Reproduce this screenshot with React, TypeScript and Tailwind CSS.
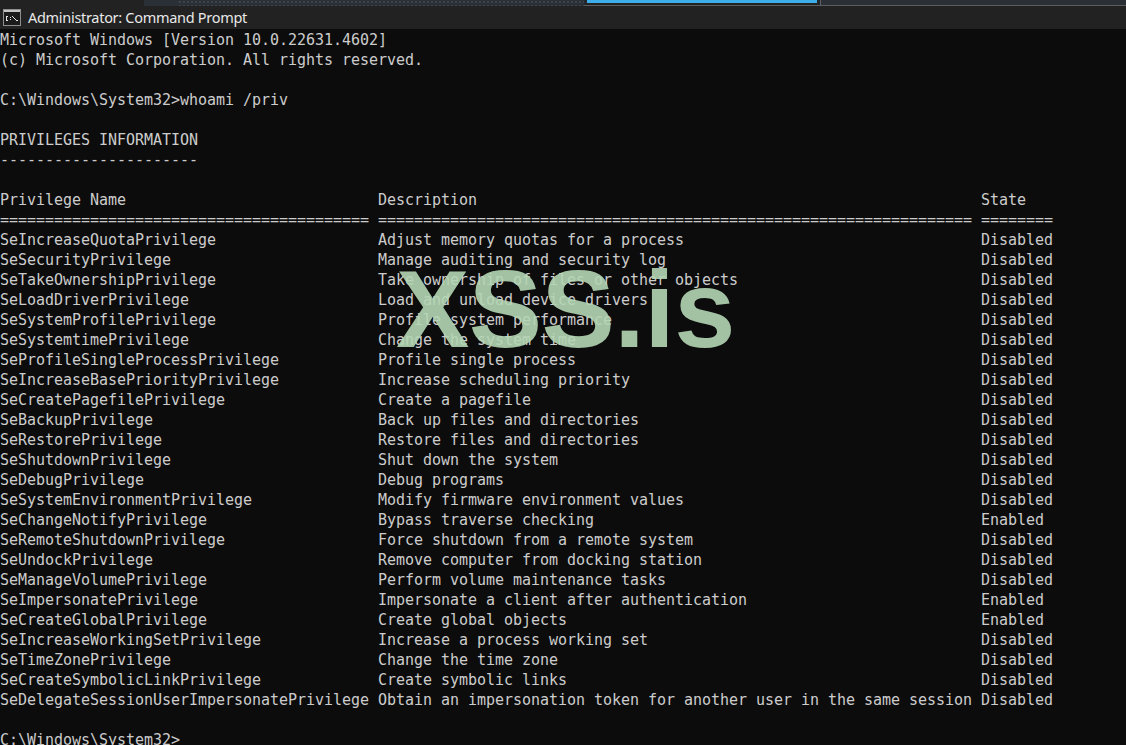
const rows: [string, string, string][] = [
  ["SeIncreaseQuotaPrivilege", "Adjust memory quotas for a process", "Disabled"],
  ["SeSecurityPrivilege", "Manage auditing and security log", "Disabled"],
  ["SeTakeOwnershipPrivilege", "Take ownership of files or other objects", "Disabled"],
  ["SeLoadDriverPrivilege", "Load and unload device drivers", "Disabled"],
  ["SeSystemProfilePrivilege", "Profile system performance", "Disabled"],
  ["SeSystemtimePrivilege", "Change the system time", "Disabled"],
  ["SeProfileSingleProcessPrivilege", "Profile single process", "Disabled"],
  ["SeIncreaseBasePriorityPrivilege", "Increase scheduling priority", "Disabled"],
  ["SeCreatePagefilePrivilege", "Create a pagefile", "Disabled"],
  ["SeBackupPrivilege", "Back up files and directories", "Disabled"],
  ["SeRestorePrivilege", "Restore files and directories", "Disabled"],
  ["SeShutdownPrivilege", "Shut down the system", "Disabled"],
  ["SeDebugPrivilege", "Debug programs", "Disabled"],
  ["SeSystemEnvironmentPrivilege", "Modify firmware environment values", "Disabled"],
  ["SeChangeNotifyPrivilege", "Bypass traverse checking", "Enabled"],
  ["SeRemoteShutdownPrivilege", "Force shutdown from a remote system", "Disabled"],
  ["SeUndockPrivilege", "Remove computer from docking station", "Disabled"],
  ["SeManageVolumePrivilege", "Perform volume maintenance tasks", "Disabled"],
  ["SeImpersonatePrivilege", "Impersonate a client after authentication", "Enabled"],
  ["SeCreateGlobalPrivilege", "Create global objects", "Enabled"],
  ["SeIncreaseWorkingSetPrivilege", "Increase a process working set", "Disabled"],
  ["SeTimeZonePrivilege", "Change the time zone", "Disabled"],
  ["SeCreateSymbolicLinkPrivilege", "Create symbolic links", "Disabled"],
  ["SeDelegateSessionUserImpersonatePrivilege", "Obtain an impersonation token for another user in the same session", "Disabled"],
];

const pad = (a: string, b: string, c: string) => a.padEnd(42) + b.padEnd(67) + c;

const lines = [
  "Microsoft Windows [Version 10.0.22631.4602]",
  "(c) Microsoft Corporation. All rights reserved.",
  "",
  "C:\\Windows\\System32>whoami /priv",
  "",
  "PRIVILEGES INFORMATION",
  "----------------------",
  "",
  pad("Privilege Name", "Description", "State"),
  pad("=".repeat(41), "=".repeat(66), "========"),
  ...rows.map((r) => pad(r[0], r[1], r[2])),
  "",
  "C:\\Windows\\System32>",
];

export default function App() {
  return (
    <div className="relative w-[1126px] h-[745px] overflow-hidden bg-[#0c0c0c] flex flex-col">
      <div className="h-[6px] shrink-0 bg-[#222222] flex">
        <div className="w-[144px] shrink-0" />
        <div className="w-[34px] shrink-0 bg-[#2a3036]" />
        <div className="w-[406px] shrink-0 bg-[#2a3036] bg-[radial-gradient(#3d444b_1px,transparent_1px)] bg-[length:4px_4px]" />
        <div className="flex-1 flex flex-col">
          <div className="h-[5px] flex">
            <div className="w-[3px] bg-[#22272c]" />
            <div className="w-[230px] h-[3px] bg-[#3daee9]" />
            <div className="w-[3px] bg-[#22272c]" />
            <div className="w-[1px] bg-[#5c6166]" />
            <div className="flex-1 bg-[#2a3036]" />
          </div>
          <div className="h-[1px] bg-[#5c5c5c]" />
        </div>
      </div>
      <div className="h-[23px] shrink-0 bg-[#222222] flex items-center pl-[3px] gap-[7px]">
        <svg width="18" height="17" viewBox="0 0 18 17" className="shrink-0" shapeRendering="crispEdges">
          <rect x="0" y="0" width="18" height="17" fill="#8f8f8f" />
          <rect x="1" y="1" width="16" height="2" fill="#c4c4c4" />
          <rect x="1" y="3" width="16" height="13" fill="#1b1b1b" />
          <path d="M3 7h2M3 8v3M3 11h2M7 8h1M7 10h1M9 7h1M10 8h1M11 9h1M12 10h1M13 11h2" stroke="#e6e6e6" fill="none" strokeWidth="1" />
        </svg>
        <span className="text-[14.5px] text-[#e8e8e8] whitespace-pre font-['Noto_Sans',sans-serif] tracking-[-0.3px]">
          Administrator: Command Prompt
        </span>
      </div>
      <pre className="m-0 pt-[1px] font-['DejaVu_Sans_Mono',monospace] text-[15px] leading-[20px] tracking-[-0.03px] text-[#cccccc]">
        {lines.map((l, i) => (
          <div key={i} className="h-[20px] whitespace-pre">
            {l}
          </div>
        ))}
      </pre>
      <div className="absolute left-[396px] top-[254px] font-['Liberation_Sans',sans-serif] font-bold text-[110px] leading-[110px] tracking-[-0.6px] text-[#b4d6b4] opacity-[0.9]">
        XSS.is
      </div>
    </div>
  );
}
